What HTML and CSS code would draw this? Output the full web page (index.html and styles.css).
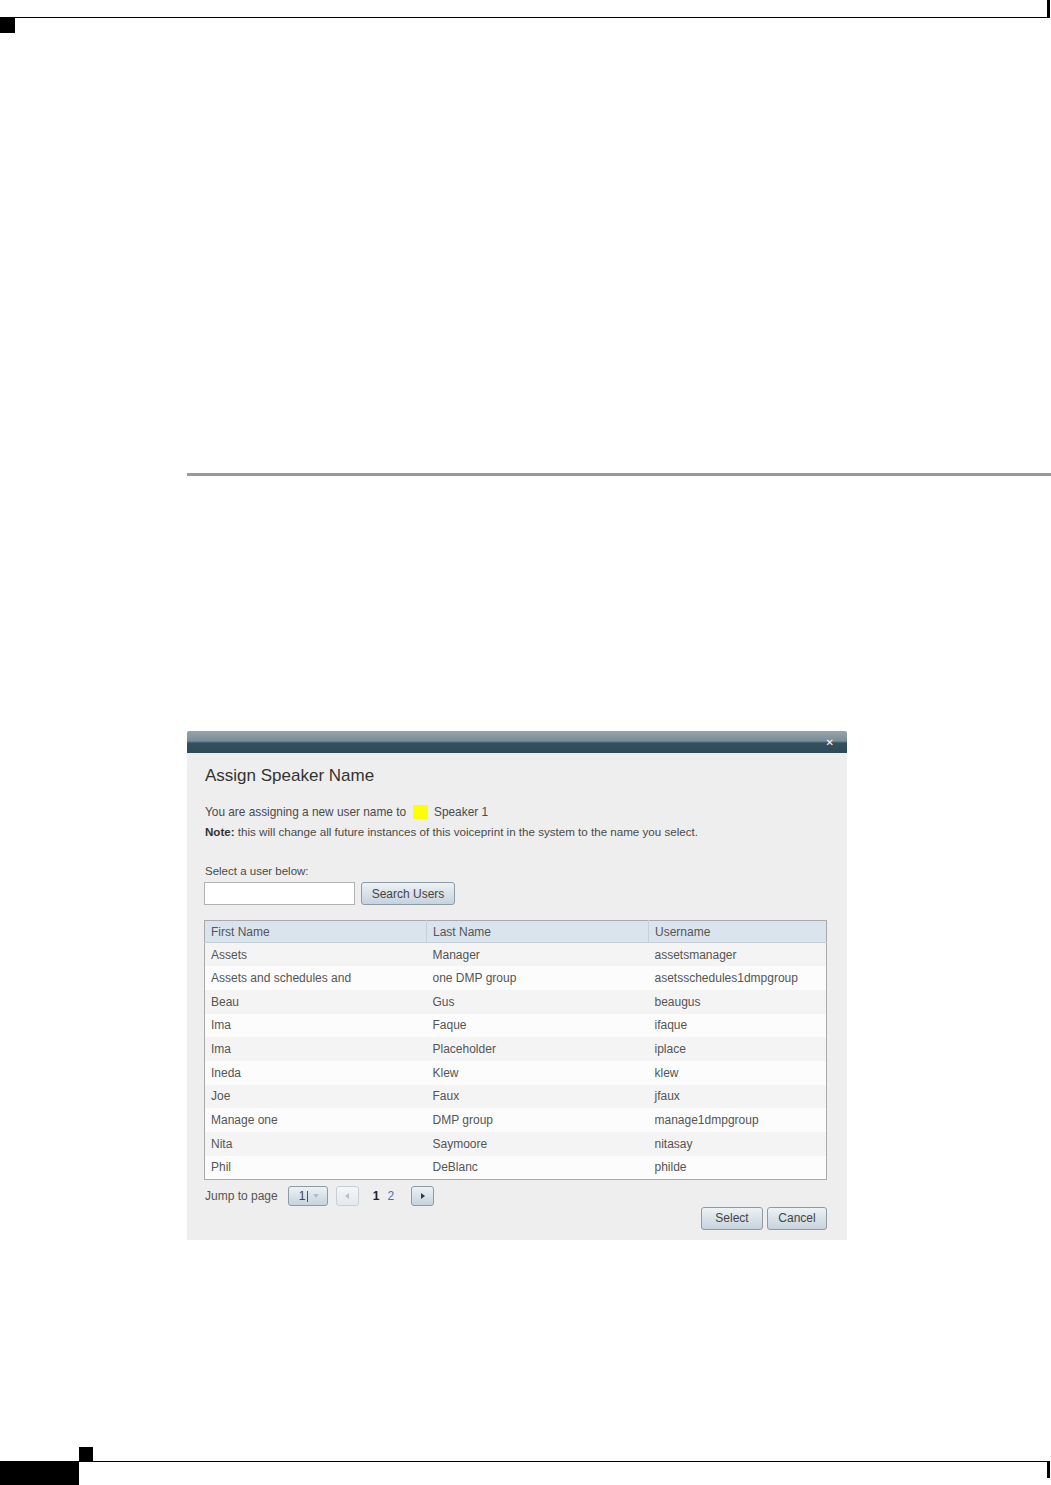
FILE: index.html
```html
<!DOCTYPE html>
<html lang="en">
  <head>
    <meta charset="UTF-8" />
    <title>Assign Speaker Name</title>
    <link rel="stylesheet" href="styles.css">
  </head>
  <body>
    <div class="page-head"></div>
    <div class="head-mark"></div>

    <div class="section-rule"></div>

    <div class="dialog">
      <div class="dialog-bar">
        <span class="dialog-close">&#x2715;</span>
      </div>

      <div class="dialog-body">
        <h2 class="dialog-title">Assign Speaker Name</h2>

        <p class="assign-line">
          You are assigning a new user name to
          <span class="swatch"></span>
          <span class="speaker">Speaker 1</span>
        </p>
        <p class="note"><strong>Note:</strong> this will change all future instances of this voiceprint in the system to the name you select.</p>

        <label class="search-label" for="searchBox">Select a user below:</label>
        <div class="search-row">
          <input type="text" id="searchBox" class="search-input" />
          <button class="btn btn-search">Search Users</button>
        </div>

        <table class="users">
          <thead>
            <tr>
              <th class="col-first">First Name</th>
              <th class="col-last">Last Name</th>
              <th>Username</th>
            </tr>
          </thead>
          <tbody>
            <tr><td>Assets</td><td>Manager</td><td>assetsmanager</td></tr>
            <tr><td>Assets and schedules and</td><td>one DMP group</td><td>asetsschedules1dmpgroup</td></tr>
            <tr><td>Beau</td><td>Gus</td><td>beaugus</td></tr>
            <tr><td>Ima</td><td>Faque</td><td>ifaque</td></tr>
            <tr><td>Ima</td><td>Placeholder</td><td>iplace</td></tr>
            <tr><td>Ineda</td><td>Klew</td><td>klew</td></tr>
            <tr><td>Joe</td><td>Faux</td><td>jfaux</td></tr>
            <tr><td>Manage one</td><td>DMP group</td><td>manage1dmpgroup</td></tr>
            <tr><td>Nita</td><td>Saymoore</td><td>nitasay</td></tr>
            <tr><td>Phil</td><td>DeBlanc</td><td>philde</td></tr>
          </tbody>
        </table>

        <div class="pager">
          <span class="pager-label">Jump to page</span>
          <button class="btn page-select">
            <span class="page-select-num">1</span>
            <span class="page-select-caret">
              <svg width="6" height="4" viewBox="0 0 6 4"><path d="M0 0h6L3 4z" fill="#b4bcc3"/></svg>
            </span>
          </button>
          <button class="btn page-arrow disabled">
            <svg width="4" height="6" viewBox="0 0 4 6"><path d="M4 0v6L0 3z" fill="#b9bfc4"/></svg>
          </button>
          <span class="page-num current">1</span>
          <span class="page-num link">2</span>
          <button class="btn page-arrow">
            <svg width="4" height="6" viewBox="0 0 4 6"><path d="M0 0v6l4-3z" fill="#2f3a42"/></svg>
          </button>
        </div>

        <div class="actions">
          <button class="btn btn-action">Select</button>
          <button class="btn btn-action">Cancel</button>
        </div>
      </div>
    </div>

    <div class="foot-mark"></div>
    <div class="page-foot">
      <div class="foot-block"></div>
      <div class="foot-line"></div>
    </div>
  </body>
</html>
```

FILE: styles.css
```css
* {
  margin: 0;
  padding: 0;
  box-sizing: border-box;
}

body {
  font-family: "Liberation Sans", Arial, sans-serif;
  background: white;
  width: 1051px;
  height: 1485px;
  overflow: hidden;
}

/* page frame */

.page-head {
  width: 1050px;
  height: 18px;
  border-bottom: 1px solid #000;
  border-right: 3px solid #000;
}

.head-mark {
  width: 15px;
  height: 15px;
  background: #000;
}

.section-rule {
  margin: 440px 0 0 187px;
  height: 3px;
  background: #999;
}

.foot-mark {
  margin: 207px 0 0 79px;
  width: 14px;
  height: 14px;
  background: #000;
}

.page-foot {
  display: flex;
  height: 25px;
}

.foot-block {
  width: 79px;
  background: #000;
}

.foot-line {
  width: 971px;
  height: 17px;
  border-top: 1px solid #000;
  border-right: 3px solid #000;
}

/* dialog */

.dialog {
  margin: 255px 0 0 187px;
  width: 660px;
  background: #eeeeee;
  color: #555;
  font-size: 12px;
}

.dialog-bar {
  height: 22px;
  background: linear-gradient(to bottom, #95a5ad 0%, #7a8d97 45%, #33505f 55%, #2d4a59 100%);
  display: flex;
  justify-content: flex-end;
  align-items: center;
  padding-right: 13px;
  border-radius: 2px 2px 0 0;
}

.dialog-close {
  color: white;
  font-size: 10px;
  font-weight: bold;
  font-family: "DejaVu Sans", sans-serif;
}

.dialog-body {
  padding: 13px 20px 10px 17px;
}

.dialog-title {
  font-size: 17px;
  font-weight: normal;
  color: #333;
  line-height: 20px;
  margin-left: 1px;
}

.assign-line,
.note {
  line-height: 20px;
  margin-left: 1px;
  color: #4a4a4a;
}

.assign-line {
  margin-top: 16px;
  font-size: 11.85px;
  display: flex;
  align-items: center;
}

.swatch {
  display: inline-block;
  width: 15px;
  height: 14px;
  background: #ffff00;
  margin: 0 6px 0 7px;
}

.note {
  font-size: 11.6px;
}

.note strong {
  color: #333;
}

.search-label {
  display: block;
  margin: 19px 0 1px 1px;
  line-height: 20px;
  font-size: 11.5px;
  color: #4a4a4a;
}

.search-row {
  display: flex;
  gap: 6px;
}

.search-input {
  width: 151px;
  height: 23px;
  border: 1px solid #b2b2b2;
  background: white;
}

.btn {
  font-family: inherit;
  font-size: 12px;
  color: #444;
  background: linear-gradient(to bottom, #eef2f5 0%, #d9e2e9 50%, #c6d3dd 100%);
  border: 1px solid #8d9ba6;
  border-radius: 3px;
  cursor: pointer;
}

.btn-search {
  width: 94px;
  height: 23px;
}

/* users table */

.users {
  margin-top: 15px;
  width: 623px;
  border-collapse: collapse;
  border: 1px solid #a9a9a9;
  background: white;
}

.users th,
.users td {
  text-align: left;
  font-weight: normal;
  padding: 0 0 0 6px;
  white-space: nowrap;
}

.users th {
  height: 22px;
  background: #dae4ed;
  border-bottom: 1px solid #c3ced7;
}

.users th.col-first,
.users th.col-last {
  width: 222px;
  border-right: 1px solid #c5d0d9;
}

.users td {
  height: 23.7px;
}

.users tbody tr:nth-child(odd) {
  background: #f4f4f4;
}

.users tbody tr:nth-child(even) {
  background: #fcfcfc;
}

/* pager */

.pager {
  margin-top: 6px;
  display: flex;
  align-items: center;
  height: 21px;
  padding-left: 1px;
}

.pager-label {
  margin-right: 10px;
}

.page-select {
  width: 40px;
  height: 20px;
  display: flex;
  align-items: center;
  padding-left: 10px;
  gap: 3px;
}

.page-select-num {
  padding-right: 2px;
  border-right: 1px solid #555;
  line-height: 11px;
}

.page-select-caret {
  display: flex;
  align-items: center;
  padding-left: 2px;
}

.page-arrow {
  width: 23px;
  height: 20px;
  display: flex;
  align-items: center;
  justify-content: center;
  margin-left: 8px;
}

.page-arrow.disabled {
  background: linear-gradient(to bottom, #f4f6f8, #e4e9ed);
  border-color: #c8d0d6;
}

.page-num {
  font-size: 12px;
}

.page-num.current {
  margin-left: 14px;
  font-weight: bold;
  color: #222;
}

.page-num.link {
  margin-left: 8px;
  color: #2b7bbd;
}

.page-num.link + .page-arrow {
  margin-left: 17px;
}

/* actions */

.actions {
  display: flex;
  justify-content: flex-end;
  gap: 4px;
}

.btn-action {
  width: 62px;
  height: 23px;
}

.btn-action + .btn-action {
  width: 60px;
}
```
